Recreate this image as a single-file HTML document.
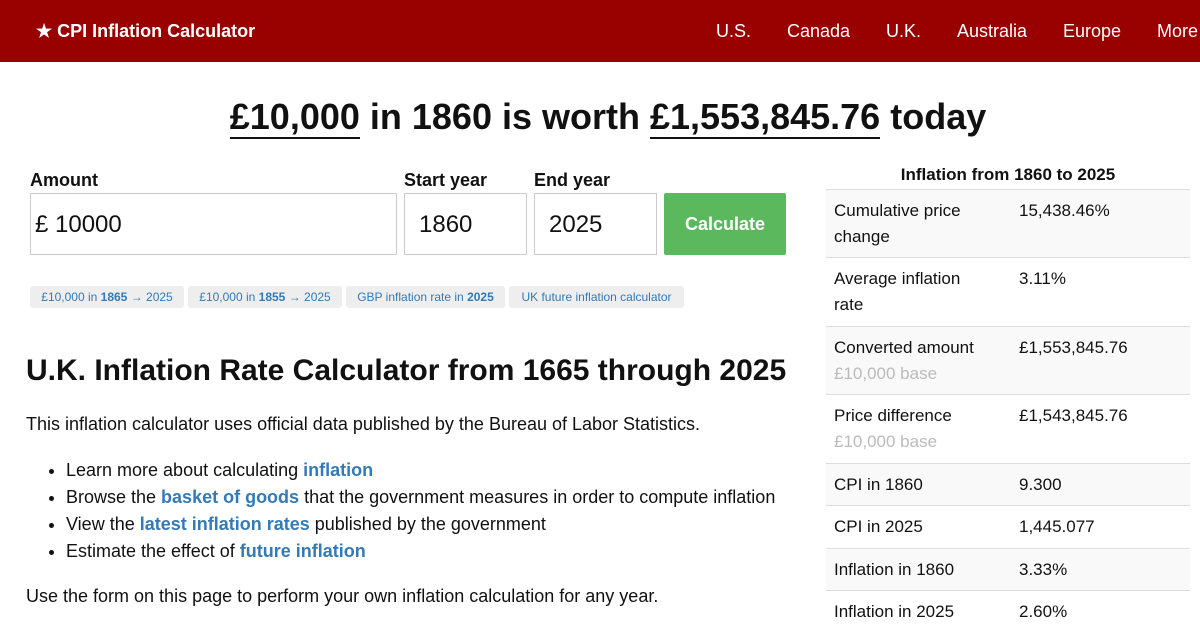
<!DOCTYPE html><html><head><style>
body{margin:0;width:1200px;height:630px;overflow:hidden;font-family:"Liberation Sans",sans-serif;background:#fff;color:#111;position:relative}
.a{position:absolute}
.nav{left:0;top:0;width:1200px;height:62px;background:#990000;color:#fff}
.nav span{position:absolute;top:21px;font-size:18px}
h1{position:absolute;left:0;width:1216px;top:96px;margin:0;text-align:center;font-size:36px;font-weight:bold}
h1 u{text-decoration:none;border-bottom:2px solid #111}
.lbl{font-size:18px;font-weight:bold;top:170px}
.inp{border:1px solid #ccc;height:62px;top:193px;font-size:24px;line-height:62px;box-sizing:border-box}
.chip{top:286px;height:22px;background:#eee;border-radius:3px;font-size:12px;color:#337ab7;line-height:22px;text-align:center}
.row{left:826px;width:364px;border-top:1px solid #ddd;font-size:17px;line-height:26px}
.row .k{position:absolute;left:8px;top:8px;width:155px}
.row .v{position:absolute;left:193px;top:8px}
.g{color:#bbb}
a{color:#337ab7;font-weight:bold;text-decoration:none}
li{margin-bottom:5px}
</style></head><body>
<div class="a nav"><span style="left:36px;font-weight:bold">★ CPI Inflation Calculator</span><span style="left:716px">U.S.</span><span style="left:787px">Canada</span><span style="left:886px">U.K.</span><span style="left:957px">Australia</span><span style="left:1063px">Europe</span><span style="left:1157px">More</span></div>
<h1><u>£10,000</u> in 1860 is worth <u>£1,553,845.76</u> today</h1>
<div class="a lbl" style="left:30px">Amount</div><div class="a lbl" style="left:404px">Start year</div><div class="a lbl" style="left:534px">End year</div>
<div class="a inp" style="left:30px;width:367px;padding-left:4px">£ 10000</div>
<div class="a inp" style="left:404px;width:123px;padding-left:14px">1860</div>
<div class="a inp" style="left:534px;width:123px;padding-left:14px">2025</div>
<div class="a" style="left:664px;top:193px;width:122px;height:62px;background:#5cb85c;color:#fff;font-weight:bold;font-size:18px;line-height:62px;text-align:center;border-radius:2px">Calculate</div>
<div class="a chip" style="left:30px;width:154px">£10,000 in <b>1865</b> → 2025</div>
<div class="a chip" style="left:188px;width:154px">£10,000 in <b>1855</b> → 2025</div>
<div class="a chip" style="left:346px;width:159px">GBP inflation rate in <b>2025</b></div>
<div class="a chip" style="left:509px;width:175px">UK future inflation calculator</div>
<div class="a" style="left:26px;top:354px;font-size:30px;font-weight:bold">U.K. Inflation Rate Calculator from 1665 through 2025</div>
<div class="a" style="left:26px;top:414px;font-size:18px">This inflation calculator uses official data published by the Bureau of Labor Statistics.</div>
<ul class="a" style="left:26px;top:459px;margin:0;padding-left:40px;font-size:18px;line-height:22px">
<li>Learn more about calculating <a>inflation</a></li>
<li>Browse the <a>basket of goods</a> that the government measures in order to compute inflation</li>
<li>View the <a>latest inflation rates</a> published by the government</li>
<li>Estimate the effect of <a>future inflation</a></li></ul>
<div class="a" style="left:26px;top:586px;font-size:18px">Use the form on this page to perform your own inflation calculation for any year.</div>
<div class="a" style="left:826px;width:364px;top:165px;text-align:center;font-weight:bold;font-size:17px">Inflation from 1860 to 2025</div>
<div class="a row" style="top:189px;height:68px;background:#f9f9f9"><div class="k">Cumulative price change</div><div class="v">15,438.46%</div></div>
<div class="a row" style="top:257px;height:68px"><div class="k">Average inflation rate</div><div class="v">3.11%</div></div>
<div class="a row" style="top:326px;height:68px;background:#f9f9f9"><div class="k">Converted amount <span class="g">£10,000 base</span></div><div class="v">£1,553,845.76</div></div>
<div class="a row" style="top:394px;height:68px"><div class="k">Price difference <span class="g">£10,000 base</span></div><div class="v">£1,543,845.76</div></div>
<div class="a row" style="top:463px;height:42px;background:#f9f9f9"><div class="k">CPI in 1860</div><div class="v">9.300</div></div>
<div class="a row" style="top:505px;height:42px"><div class="k">CPI in 2025</div><div class="v">1,445.077</div></div>
<div class="a row" style="top:548px;height:42px;background:#f9f9f9"><div class="k">Inflation in 1860</div><div class="v">3.33%</div></div>
<div class="a row" style="top:590px;height:42px"><div class="k">Inflation in 2025</div><div class="v">2.60%</div></div>
</body></html>
